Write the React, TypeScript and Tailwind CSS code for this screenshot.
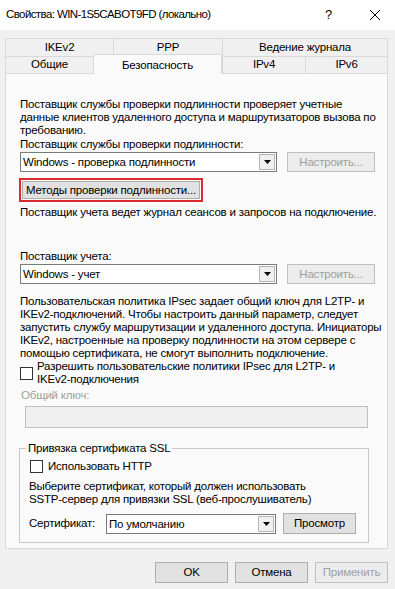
import type { ReactNode } from "react";

const font = { fontFamily: '"Liberation Sans", Arial, sans-serif' };

function Checkbox() {
  return <span className="block h-[13px] w-[13px] shrink-0 border border-[#333333] bg-white" />;
}

function Combo({ text, className }: { text: string; className: string }) {
  return (
    <div className={`flex h-[20px] border border-[#7a7a7a] bg-white ${className}`}>
      <span className="flex-1 truncate pl-[2px] leading-[18px]">{text}</span>
      <span className="m-[1px] flex w-[16px] items-center justify-center border border-[#b5b5b5] bg-[#f0f0f0]">
        <svg width="7" height="4" viewBox="0 0 7 4">
          <path d="M0 0H7L3.5 4Z" fill="#000" />
        </svg>
      </span>
    </div>
  );
}

function Button({
  children,
  disabled,
  className,
}: {
  children: ReactNode;
  disabled?: boolean;
  className: string;
}) {
  return (
    <div
      className={`flex items-center justify-center whitespace-nowrap border ${
        disabled
          ? "border-[#bfbfbf] bg-[#ececec] text-[#a0a0a0]"
          : "border-[#adadad] bg-[#e1e1e1] text-black"
      } ${className}`}
    >
      {children}
    </div>
  );
}

function Tab({ label, w, selected }: { label: string; w: string; selected?: boolean }) {
  if (selected) {
    return (
      <div
        className={`relative top-[1px] z-10 flex h-[20px] items-start justify-center border-x border-t border-[#d9d9d9] bg-[#fafafa] pt-[2px] ${w}`}
      >
        {label}
      </div>
    );
  }
  return (
    <div
      className={`flex h-full items-center justify-center border-l border-t border-[#d9d9d9] bg-[#f0f0f0] ${w}`}
    >
      {label}
    </div>
  );
}

export default function App() {
  return (
    <div
      className="relative h-[589px] w-[395px] overflow-hidden bg-[#f0f0f0] text-[11.5px] tracking-[-0.2px] text-black"
      style={font}
    >
      {/* title bar */}
      <div className="flex h-[30px] items-center bg-white">
        <span className="pl-[6px] tracking-[-0.6px]">Свойства: WIN-1S5CABOT9FD (локально)</span>
        <span className="ml-auto mr-[37px] text-[13px]">?</span>
        <svg className="mr-[14px]" width="12" height="12" viewBox="0 0 12 12">
          <path d="M1 1L11 11M11 1L1 11" stroke="#000" strokeWidth="1" />
        </svg>
      </div>

      {/* tabs */}
      <div className="ml-[5px] mt-[8px] w-[383px]">
        <div className="flex h-[18px] border-r border-[#d9d9d9]">
          <Tab label="IKEv2" w="w-[108px]" />
          <Tab label="PPP" w="w-[109px]" />
          <Tab label="Ведение журнала" w="flex-1" />
        </div>
        <div className="flex h-[17px] items-end border-r border-[#d9d9d9]">
          <Tab label="Общие" w="w-[88px]" />
          <Tab label="Безопасность" w="w-[129px]" selected />
          <Tab label="IPv4" w="w-[83px]" />
          <Tab label="IPv6" w="flex-1" />
        </div>

        {/* panel */}
        <div className="h-[476px] border border-[#d9d9d9] bg-[#fafafa] pl-[14px] leading-[13px]">
          <p className="mt-[24px] whitespace-nowrap">
            Поставщик службы проверки подлинности проверяет учетные
            <br />
            данные клиентов удаленного доступа и маршрутизаторов вызова по
            <br />
            требованию.
          </p>
          <p className="mt-[1px]">Поставщик службы проверки подлинности:</p>
          <div className="mt-[1px] flex items-center">
            <Combo text="Windows - проверка подлинности" className="w-[257px]" />
            <Button disabled className="ml-[10px] h-[20px] w-[88px]">
              Настроить...
            </Button>
          </div>
          <div className="-ml-[1px] mt-[6px] w-[184px] border-2 border-[#dc2a2e] p-[1px]">
            <Button className="h-[18px] w-full">Методы проверки подлинности...</Button>
          </div>
          <p className="mt-[4px] whitespace-nowrap">
            Поставщик учета ведет журнал сеансов и запросов на подключение.
          </p>
          <p className="mt-[31px]">Поставщик учета:</p>
          <div className="mt-[1px] flex items-center">
            <Combo text="Windows - учет" className="w-[257px]" />
            <Button disabled className="ml-[10px] h-[20px] w-[88px]">
              Настроить...
            </Button>
          </div>
          <p className="mt-[11px] whitespace-nowrap">
            Пользовательская политика IPsec задает общий ключ для L2TP- и
            <br />
            IKEv2-подключений. Чтобы настроить данный параметр, следует
            <br />
            запустить службу маршрутизации и удаленного доступа. Инициаторы
            <br />
            IKEv2, настроенные на проверку подлинности на этом сервере с
            <br />
            помощью сертификата, не смогут выполнить подключение.
          </p>
          <div className="flex items-center">
            <Checkbox />
            <p className="ml-[4px] whitespace-nowrap">
              Разрешить пользовательские политики IPsec для L2TP- и
              <br />
              IKEv2-подключения
            </p>
          </div>
          <p className="ml-[1px] mt-[3px] text-[#a0a0a0]">Общий ключ:</p>
          <div className="ml-[5px] mt-[4px] h-[22px] w-[343px] border border-[#bfbfbf] bg-[#f0f0f0]" />

          <fieldset className="-ml-[1px] mt-[14px] w-[350px] border border-[#c8c8c8] pb-[8px] pl-[10px]">
            <legend className="-ml-[4px] px-[2px]">Привязка сертификата SSL</legend>
            <div className="mt-[5px] flex items-center">
              <Checkbox />
              <span className="ml-[5px]">Использовать HTTP</span>
            </div>
            <p className="-ml-[1px] mt-[7px] whitespace-nowrap">
              Выберите сертификат, который должен использовать
              <br />
              SSTP-сервер для привязки SSL (веб-прослушиватель)
            </p>
            <div className="-ml-[1px] mt-[7px] flex items-center">
              <span className="w-[77px]">Сертификат:</span>
              <Combo text="По умолчанию" className="w-[170px]" />
              <Button className="ml-[7px] h-[21px] w-[73px]">Просмотр</Button>
            </div>
          </fieldset>
        </div>
      </div>

      {/* bottom buttons */}
      <div className="mr-[7px] mt-[13px] flex justify-end gap-[7px]">
        <Button className="h-[21px] w-[73px]">OK</Button>
        <Button className="h-[21px] w-[73px]">Отмена</Button>
        <Button disabled className="h-[21px] w-[73px]">
          Применить
        </Button>
      </div>
    </div>
  );
}
